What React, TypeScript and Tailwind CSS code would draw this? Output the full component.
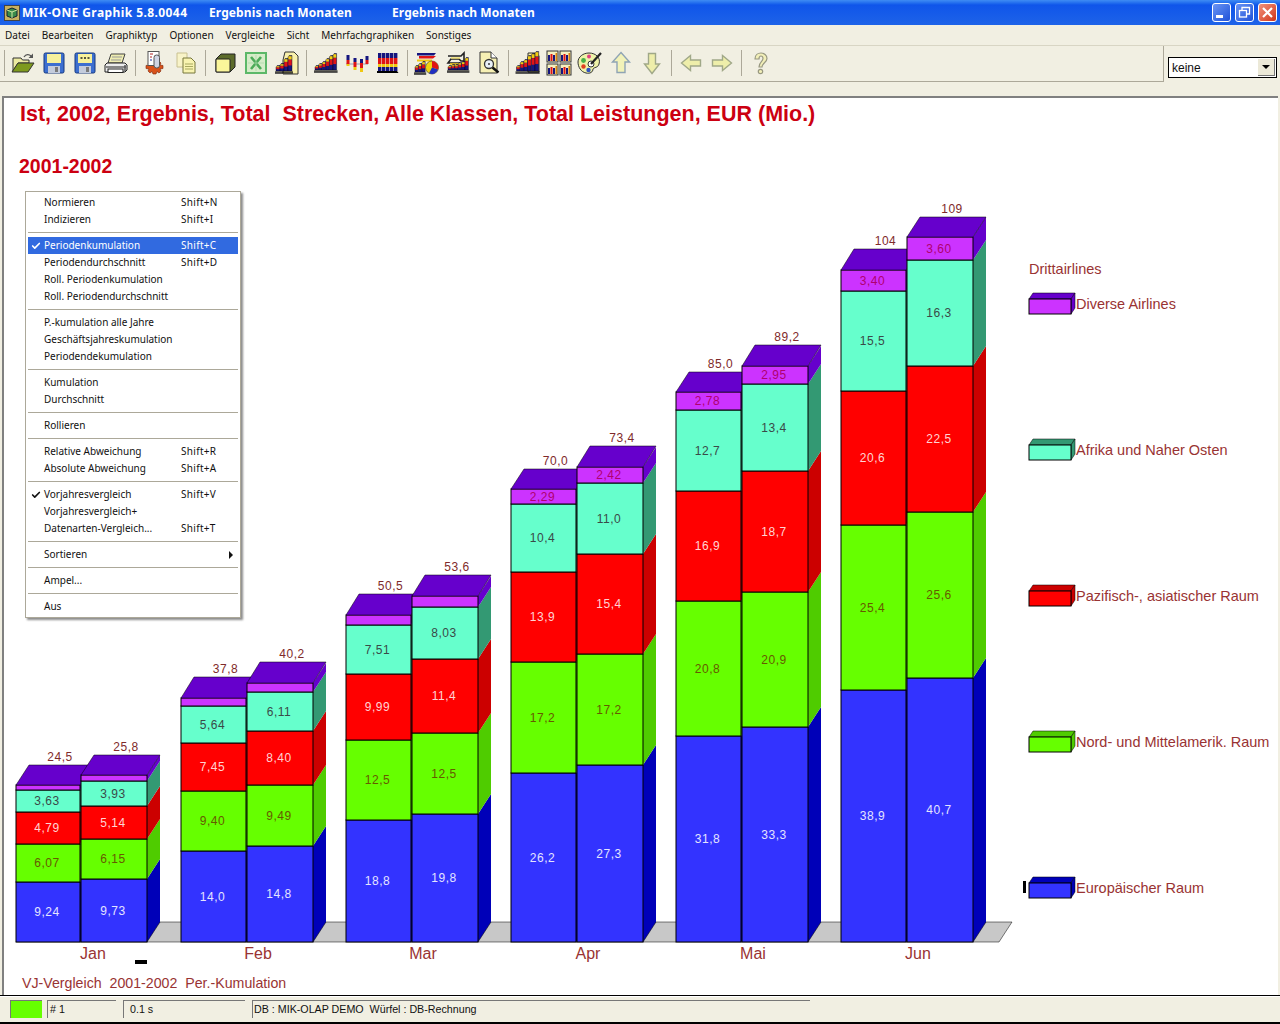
import type { ReactNode } from "react";
import { Check } from "lucide-react";

const colors = [
  { front: "#3333ff", side: "#0000b8", text: "#e4e4ff" },
  { front: "#66ff00", side: "#4fcc00", text: "#665a00" },
  { front: "#ff0000", side: "#cc0000", text: "#ffd4d4" },
  { front: "#66ffcc", side: "#339973", text: "#3a4a48" },
  { front: "#cc33ff", side: "#6600cc", text: "#b00070" },
];
const topColor = "#6600cc";

type Bar = { x: number; w: number; tops: number[]; back: number; total: string; labels: string[] };

const groups: { name: string; cx: number; bars: Bar[] }[] = [
  {
    name: "Jan",
    cx: 93,
    bars: [
      { x: 16, w: 64, tops: [882, 844, 812, 790, 785], back: 765, total: "24,5", labels: ["9,24", "6,07", "4,79", "3,63", ""] },
      { x: 81, w: 66, tops: [879, 839, 806, 781, 775], back: 755, total: "25,8", labels: ["9,73", "6,15", "5,14", "3,93", ""] },
    ],
  },
  {
    name: "Feb",
    cx: 258,
    bars: [
      { x: 181, w: 65, tops: [851, 791, 743, 706, 698], back: 677, total: "37,8", labels: ["14,0", "9,40", "7,45", "5,64", ""] },
      { x: 247, w: 66, tops: [846, 785, 731, 692, 683], back: 662, total: "40,2", labels: ["14,8", "9,49", "8,40", "6,11", ""] },
    ],
  },
  {
    name: "Mar",
    cx: 423,
    bars: [
      { x: 346, w: 65, tops: [820, 740, 674, 625, 615], back: 594, total: "50,5", labels: ["18,8", "12,5", "9,99", "7,51", ""] },
      { x: 412, w: 66, tops: [814, 733, 659, 607, 596], back: 575, total: "53,6", labels: ["19,8", "12,5", "11,4", "8,03", ""] },
    ],
  },
  {
    name: "Apr",
    cx: 588,
    bars: [
      { x: 511, w: 65, tops: [773, 662, 572, 504, 489], back: 469, total: "70,0", labels: ["26,2", "17,2", "13,9", "10,4", "2,29"] },
      { x: 577, w: 66, tops: [765, 654, 554, 483, 467], back: 446, total: "73,4", labels: ["27,3", "17,2", "15,4", "11,0", "2,42"] },
    ],
  },
  {
    name: "Mai",
    cx: 753,
    bars: [
      { x: 676, w: 65, tops: [736, 601, 491, 410, 392], back: 372, total: "85,0", labels: ["31,8", "20,8", "16,9", "12,7", "2,78"] },
      { x: 742, w: 66, tops: [727, 592, 471, 384, 366], back: 345, total: "89,2", labels: ["33,3", "20,9", "18,7", "13,4", "2,95"] },
    ],
  },
  {
    name: "Jun",
    cx: 918,
    bars: [
      { x: 841, w: 65, tops: [690, 525, 391, 291, 270], back: 249, total: "104", labels: ["38,9", "25,4", "20,6", "15,5", "3,40"] },
      { x: 907, w: 66, tops: [678, 512, 366, 260, 237], back: 217, total: "109", labels: ["40,7", "25,6", "22,5", "16,3", "3,60"] },
    ],
  },
];

const legend = [
  { y: 304, label: "Diverse Airlines", i: 4 },
  { y: 450, label: "Afrika und Naher Osten", i: 3 },
  { y: 596, label: "Pazifisch-, asiatischer Raum", i: 2 },
  { y: 742, label: "Nord- und Mittelamerik. Raum", i: 1 },
  { y: 888, label: "Europäischer Raum", i: 0 },
];

const BASE = 942;
const DX = 13;
const DY = 20;

function StackedBar({ bar }: { bar: Bar }) {
  const right = bar.x + bar.w;
  return (
    <g stroke="#000" strokeWidth="1">
      {bar.tops.map((top, i) => {
        const bottom = i === 0 ? BASE : bar.tops[i - 1];
        const c = colors[i];
        return (
          <g key={i}>
            <polygon
              points={`${right},${bottom} ${right + DX},${bottom - DY} ${right + DX},${top - DY} ${right},${top}`}
              fill={c.side}
              strokeWidth="0"
            />
            <rect x={bar.x} y={top} width={bar.w} height={bottom - top} fill={c.front} />
          </g>
        );
      })}
      <line x1={right} y1={BASE} x2={right + DX} y2={BASE - DY} strokeWidth="0.5" />
      <polygon
        points={`${bar.x},${bar.tops[4]} ${bar.x + DX},${bar.back} ${right + DX},${bar.back} ${right},${bar.tops[4]}`}
        fill={topColor}
        strokeWidth="0.5"
      />
    </g>
  );
}

function BarLabels({ bar }: { bar: Bar }) {
  const cx = bar.x + bar.w / 2 - 1;
  return (
    <g fontSize="12" textAnchor="middle" letterSpacing="0.5">
      {bar.labels.map((label, i) => {
        if (!label) return null;
        const bottom = i === 0 ? BASE : bar.tops[i - 1];
        return (
          <text key={i} x={cx} y={(bottom + bar.tops[i]) / 2 + 4} fill={colors[i].text}>
            {label}
          </text>
        );
      })}
      <text x={cx + 13} y={bar.back - 4} fill="#7f2a2a">
        {bar.total}
      </text>
    </g>
  );
}

function Chart() {
  return (
    <svg
      width="1275"
      height="780"
      viewBox="4 190 1275 780"
      className="block shrink-0"
      style={{ fontFamily: "'Liberation Sans', Arial, sans-serif" }}
    >
      <polygon points="16,942 29,922 1012,922 999,942" fill="#c8c8c8" stroke="#000" strokeWidth="0.5" />
      {groups.map((g) => (
        <g key={g.name}>
          <StackedBar bar={g.bars[0]} />
          <StackedBar bar={g.bars[1]} />
          <BarLabels bar={g.bars[0]} />
          <BarLabels bar={g.bars[1]} />
          <text x={g.cx} y={959} fontSize="16" textAnchor="middle" fill="#993333">
            {g.name}
          </text>
        </g>
      ))}
      <rect x="135" y="960" width="12" height="4" fill="#000" />
      <text x="1029" y="274" fontSize="14.5" fill="#993333">
        Drittairlines
      </text>
      {legend.map((l) => (
        <g key={l.label}>
          <polygon
            points={`1029,${l.y - 5} 1033,${l.y - 11} 1075,${l.y - 11} 1071,${l.y - 5}`}
            fill={colors[l.i].side}
            stroke="#000"
            strokeWidth="0.5"
          />
          <polygon
            points={`1071,${l.y - 5} 1075,${l.y - 11} 1075,${l.y + 4} 1071,${l.y + 10}`}
            fill={colors[l.i].side}
            stroke="#000"
            strokeWidth="0.5"
          />
          <rect x="1029" y={l.y - 5} width="42" height="15" fill={colors[l.i].front} stroke="#000" strokeWidth="1" />
          <text x="1076" y={l.y + 5} fontSize="14.5" fill="#993333">
            {l.label}
          </text>
        </g>
      ))}
      <rect x="1023" y="881" width="3" height="12" fill="#000" />
    </svg>
  );
}

/* ---- toolbar icons ---- */

function Ico({ children }: { children: ReactNode }) {
  return (
    <svg width="26" height="26" viewBox="0 0 26 26" className="block">
      {children}
    </svg>
  );
}

// stacked yellow/red/blue columns with a black foot, as on the old chart buttons
function MiniBars({ x, base, heights, w = 3.6 }: { x: number; base: number; heights: number[]; w?: number }) {
  return (
    <g>
      {heights.map((h, i) => {
        const bx = x + i * w;
        return (
          <g key={i}>
            <path d={`M${bx} ${base}V${base - h + 1}l1.200-1.500h${w - 1.2}V${base}z`} fill="#15157e" stroke="#000" strokeWidth="0.4" />
            <rect x={bx + 0.3} y={base - h * 0.75} width={w - 0.6} height={h * 0.38} fill="#e01414" />
            <rect x={bx + 0.3} y={base - h + 0.2} width={w - 0.6} height={h * 0.22} fill="#f4cf10" />
          </g>
        );
      })}
      <path d={`M${x - 1} ${base + 0.5}h${heights.length * w + 2}v1.200h-${heights.length * w + 2}z`} fill="#000" />
      <path d={`M${x - 1} ${base + 2.5}h${heights.length * w + 2}`} stroke="#333" strokeWidth="0.8" />
    </g>
  );
}

const folder = (
  <Ico>
    <path d="M3 8h8l1.500 2H19v3H8L3 21z" fill="#eceaa0" stroke="#333" />
    <path d="M8 13h16l-6 9H2z" fill="#7e9a1e" stroke="#333" />
    <path d="M14 7c2-3 5-3 7-1" fill="none" stroke="#555" strokeWidth="1.300" />
    <path d="M23 3.500v4.500h-4.500z" fill="#555" />
  </Ico>
);

function Floppy({ dots }: { dots?: boolean }) {
  return (
    <Ico>
      <rect x="3" y="3" width="20" height="20" rx="1.500" fill="#3d6fd0" stroke="#17397f" />
      <rect x="6" y="4" width="14" height="9" fill="#f7f19c" />
      {dots && <path d="M8.500 8h2M12 8h2M15.500 8h2" stroke="#222" strokeWidth="1.400" />}
      <rect x="7" y="16" width="12" height="7" fill="#c4ccdc" />
      <rect x="14" y="17" width="3" height="5" fill="#7a7a7a" />
    </Ico>
  );
}

const leftIcons: (ReactNode | "sep")[] = [
  folder,
  <Floppy />,
  <Floppy dots />,
  <Ico>
    <path d="M8 4h14l-3 9H5z" fill="#eeecb0" stroke="#444" />
    <path d="M9 7h10M8 10h10" stroke="#999" />
    <path d="M4 13h18l2 2v5l-2 2H2v-7z" fill="#ececec" stroke="#222" />
    <path d="M3 17h20" stroke="#222" />
    <rect x="5" y="19" width="15" height="3.500" fill="#fff" stroke="#222" />
    <path d="M22 15v6" stroke="#555" strokeWidth="1.500" />
  </Ico>,
  "sep",
  <Ico>
    <path
      d="M13 12l2 1 2-2 2 2-1 2 3 .5v3l-3 .500 1 2-2 2-2-1.500-1 2.500h-3l-1-2.500-2 1.500-2-2 1-2-3-.500v-3l3-.500-1-2 2-2 2 2z"
      fill="#d8521a"
      stroke="#7a2408"
      strokeWidth="0.600"
    />
    <rect x="6" y="1.500" width="11" height="14" fill="#fff" stroke="#555" />
    <path d="M8 4h3M8 7h2" stroke="#b02020" />
    <path d="M8 10h2" stroke="#2030a0" />
    <rect x="12" y="5" width="5.500" height="13" rx="2.500" fill="#cfd4e4" stroke="#555" />
  </Ico>,
  <Ico>
    <path d="M4 3h10v14H4z" fill="#f8f3c8" stroke="#c8c090" />
    <path d="M10 8h8l4 4v11H10z" fill="#f8f3b0" stroke="#77763c" />
    <path d="M12 14h8M12 16.500h8M12 19h8" stroke="#a8a860" />
  </Ico>,
  "sep",
  <Ico>
    <path d="M4 9l5-5h14v13l-5 5H4z" fill="#5c6b2a" stroke="#222" />
    <rect x="4" y="9" width="14" height="13" rx="1" fill="#fbf69a" stroke="#222" />
  </Ico>,
  <Ico>
    <rect x="3" y="3" width="20" height="20" fill="#d6ecc8" stroke="#5cb868" strokeWidth="2" />
    <path d="M8 7l10 12M18 7L8 19" stroke="#4cab58" strokeWidth="2.600" />
    <path d="M5 13h16M13 5v16" stroke="#a8d8a8" strokeWidth="0.700" />
  </Ico>,
  <Ico>
    <path d="M11 2h9l4 4v18H9V10z" fill="#f8f0ac" stroke="#333" />
    <MiniBars x={2} base={21} heights={[5, 7, 12, 15]} w={4} />
  </Ico>,
  "sep",
  <Ico>
    <MiniBars x={2} base={20} heights={[4, 6, 8, 11, 14, 16]} />
  </Ico>,
  <Ico>
    <path d="M2 14h22" stroke="#9a9ab0" strokeWidth="1" />
    <path d="M4 5v5M11 8v4M17.500 9v4M23 6v4" stroke="#15157e" strokeWidth="3" />
    <path d="M4 10v4M11 12v5M17.500 13v5M23 10v4" stroke="#e01414" strokeWidth="3" />
    <path d="M11 17v3M17.500 18v4M4 14v2" stroke="#f0c810" strokeWidth="3" />
  </Ico>,
  <Ico>
    {[3, 7, 11, 15, 19].map((x) => (
      <g key={x}>
        <rect x={x} y="3" width="3.400" height="5" fill="#15157e" />
        <rect x={x} y="8" width="3.400" height="6" fill="#e01414" />
        <rect x={x} y="14" width="3.400" height="3" fill="#f0c810" />
        <rect x={x} y="17" width="3.400" height="4" fill="#15157e" />
      </g>
    ))}
    <path d="M2 21h20l1.500 2H2z" fill="#000" />
  </Ico>,
  "sep",
  <Ico>
    <path d="M3 3h19l-2 2.500H3z" fill="#15157e" />
    <path d="M5 6h17l-3 2.500H5z" fill="#e01414" />
    <path d="M3 9.500h15v2H3z" fill="#f0c810" />
    <MiniBars x={1} base={22} heights={[6, 8, 10]} w={3.400} />
    <circle cx="18" cy="17.500" r="6.500" fill="#f0d410" stroke="#333" strokeWidth="0.600" />
    <path d="M18 17.500V11a6.500 6.500 0 0 1 6 8.500z" fill="#e01414" />
    <path d="M18 17.500l6 2a6.500 6.500 0 0 1-9 3.800z" fill="#2030c0" />
  </Ico>,
  <Ico>
    <path d="M3 6h13l3-3v8h-3l-2-2H6l-3 4h12" fill="none" stroke="#222" strokeWidth="1.600" />
    <path d="M6 8h9" stroke="#f0e070" strokeWidth="1.500" />
    <path d="M5 14h16" stroke="#f0c810" strokeWidth="1.500" />
    <MiniBars x={3} base={20} heights={[4, 5, 5, 7, 8, 12]} w={3.400} />
  </Ico>,
  <Ico>
    <path d="M4 2h11l6 6v15H4z" fill="#f6f0b4" stroke="#333" />
    <path d="M15 2v6h6" fill="#fff" stroke="#333" />
    <circle cx="13" cy="14" r="4.500" fill="#e8f0f8" stroke="#333" strokeWidth="1.300" />
    <path d="M12 13h2v2h-2z" fill="#666" />
    <path d="M16.500 17.500l6 5" stroke="#111" strokeWidth="2.400" />
  </Ico>,
  "sep",
  <Ico>
    <path d="M13 3h9l2 3v16H13z" fill="#f8f0a8" stroke="#333" />
    <MiniBars x={1.500} base={21} heights={[5, 9, 11, 15, 17, 19]} w={3.700} />
  </Ico>,
  <Ico>
    {[
      [1, 1],
      [14, 1],
      [1, 14],
      [14, 14],
    ].map(([x, y]) => (
      <g key={`${x}-${y}`}>
        <rect x={x} y={y} width="11" height="11" fill="#f4f0c0" stroke="#333" />
        <rect x={x + 1} y={y + 4} width="2" height="6" fill="#15157e" />
        <rect x={x + 3.500} y={y + 3} width="2" height="7" fill="#e01414" />
        <rect x={x + 6} y={y + 4} width="2" height="6" fill="#15157e" />
        <rect x={x + 8.500} y={y + 2} width="1.600" height="8" fill="#d88010" />
      </g>
    ))}
  </Ico>,
  <Ico>
    <path d="M12 3c7 0 12 5 10 11-1 4-5 3-6 5 0 3-3 5-7 4C4 22 1 17 1 12 1 7 6 3 12 3z" fill="#eef2a8" stroke="#333" />
    <circle cx="6.500" cy="10.500" r="2.400" fill="#48b048" />
    <circle cx="12" cy="6.500" r="2" fill="#e04080" />
    <circle cx="6.500" cy="16.500" r="2.200" fill="#e04020" />
    <circle cx="11.500" cy="20" r="2.200" fill="#3050c0" />
    <circle cx="14" cy="14" r="3" fill="#fff" stroke="#333" />
    <path d="M24 3L14 14" stroke="#222" strokeWidth="2.200" />
  </Ico>,
  <Ico>
    <path d="M13 2.500l8.500 9.500H17v10.500H9V12H4.500z" fill="#f2f2b8" stroke="#8fa4b4" strokeWidth="1.400" />
  </Ico>,
  <Ico>
    <path d="M13 23.500L5.500 14H9.500V3.500h7V14h4z" fill="#eeeeaa" stroke="#a0a888" strokeWidth="1.400" />
  </Ico>,
  "sep",
  <Ico>
    <path d="M3.500 13l9-7.500v4.500h10v6h-10v4.500z" fill="#eeeeaa" stroke="#a0a888" strokeWidth="1.400" />
  </Ico>,
  <Ico>
    <path d="M22.500 13l-9-7.500v4.500h-10v6h10v4.500z" fill="#eeeeaa" stroke="#a0a888" strokeWidth="1.400" />
  </Ico>,
  "sep",
  <Ico>
    <path
      d="M7 9c0-4 3-6 6-6s6 2 6 5.500c0 4-5 4.500-5 8.500h-3c0-5 4-5.500 4-8.500 0-1.500-1-2.500-2-2.500s-2 1-2 3z"
      fill="#f2efb8"
      stroke="#989880"
      strokeWidth="1.200"
    />
    <circle cx="12.500" cy="21.500" r="2.200" fill="#f2efb8" stroke="#989880" strokeWidth="1.200" />
  </Ico>,
];

/* ---- context menu ---- */

type MenuItem = { label: string; short?: string; checked?: boolean; active?: boolean; arrow?: boolean } | null;

const menu: MenuItem[] = [
  { label: "Normieren", short: "Shift+N" },
  { label: "Indizieren", short: "Shift+I" },
  null,
  { label: "Periodenkumulation", short: "Shift+C", checked: true, active: true },
  { label: "Periodendurchschnitt", short: "Shift+D" },
  { label: "Roll. Periodenkumulation" },
  { label: "Roll. Periodendurchschnitt" },
  null,
  { label: "P.-kumulation alle Jahre" },
  { label: "Geschäftsjahreskumulation" },
  { label: "Periodendekumulation" },
  null,
  { label: "Kumulation" },
  { label: "Durchschnitt" },
  null,
  { label: "Rollieren" },
  null,
  { label: "Relative Abweichung", short: "Shift+R" },
  { label: "Absolute Abweichung", short: "Shift+A" },
  null,
  { label: "Vorjahresvergleich", short: "Shift+V", checked: true },
  { label: "Vorjahresvergleich+" },
  { label: "Datenarten-Vergleich...", short: "Shift+T" },
  null,
  { label: "Sortieren", arrow: true },
  null,
  { label: "Ampel..." },
  null,
  { label: "Aus" },
];

function ContextMenu() {
  return (
    <div className="absolute left-[25px] top-[191px] w-[216px] h-[427px] bg-white border border-[#aca899] pt-[2px] px-[2px] shadow-[2px_2px_2px_rgba(0,0,0,0.45)] font-['Noto_Sans',sans-serif] text-[10px] text-[#111]">
      {menu.map((item, i) =>
        item === null ? (
          <div key={i} className="h-[9px] flex items-center">
            <div className="h-px w-full bg-[#aca899]" />
          </div>
        ) : (
          <div
            key={i}
            className={`relative h-[17px] flex items-center pl-[16px] ${item.active ? "bg-[#316ae0] text-white" : ""}`}
          >
            {item.checked && <Check className="absolute left-[3px] top-[4px] w-[10px] h-[10px]" strokeWidth={4} />}
            <span className="w-[137px] whitespace-nowrap">{item.label}</span>
            {item.short && <span className="tracking-[0.3px]">{item.short}</span>}
            {item.arrow && <div className="absolute right-[5px] top-[5px] border-y-[4px] border-y-transparent border-l-[4px] border-l-[#111]" />}
          </div>
        ),
      )}
    </div>
  );
}

const menuBar = ["Datei", "Bearbeiten", "Graphiktyp", "Optionen", "Vergleiche", "Sicht", "Mehrfachgraphiken", "Sonstiges"];

function WinButton({ children, close }: { children: ReactNode; close?: boolean }) {
  return (
    <div
      className={`w-[19px] h-[19px] rounded-[3px] border border-white flex items-center justify-center ${
        close ? "bg-gradient-to-br from-[#f0907a] to-[#d03010]" : "bg-gradient-to-br from-[#6a94f4] to-[#1f50d8]"
      }`}
    >
      {children}
    </div>
  );
}

export default function App() {
  return (
    <div className="relative w-[1280px] h-[1024px] overflow-hidden flex flex-col bg-[#f1efe2] font-['Noto_Sans',sans-serif]">
      {/* title bar */}
      <div className="h-[25px] shrink-0 flex items-center bg-gradient-to-b from-[#3f8cf3] via-[#0f55ea] via-[20%] to-[#1e63e8] text-white font-bold text-[12px] pl-[4px] pr-[3px]">
        <svg width="16" height="16" viewBox="0 0 16 16" className="mr-[2px]">
          <rect x="0.500" y="0.500" width="15" height="15" fill="#c8b060" stroke="#444" />
          <path d="M8 3l5 2v6l-5 2-5-2V5z" fill="#3a8a4a" stroke="#123" />
          <path d="M3 5l5 2 5-2M8 7v6" stroke="#cfe8a0" fill="none" />
        </svg>
        <span className="w-[187px] whitespace-nowrap tracking-[0.42px]">MIK-ONE Graphik 5.8.0044</span>
        <span className="w-[183px] whitespace-nowrap tracking-[0.1px]">Ergebnis nach Monaten</span>
        <span className="whitespace-nowrap tracking-[0.1px]">Ergebnis nach Monaten</span>
        <div className="ml-auto flex gap-[4px]">
          <WinButton>
            <div className="w-[7px] h-[3px] bg-white mt-[8px] mr-[5px]" />
          </WinButton>
          <WinButton>
            <svg width="13" height="13" viewBox="0 0 13 13" fill="none" stroke="#fff" strokeWidth="1.300">
              <path d="M4 4V1.500h7.500V8H9" />
              <rect x="1.500" y="4.500" width="7" height="6.500" />
            </svg>
          </WinButton>
          <WinButton close>
            <svg width="13" height="13" viewBox="0 0 13 13" stroke="#fff" strokeWidth="2.200">
              <path d="M2 2l9 9M11 2l-9 9" />
            </svg>
          </WinButton>
        </div>
      </div>

      {/* menu bar */}
      <div className="h-[21px] shrink-0 flex items-center gap-[12px] pl-[5px] text-[10px] text-[#111] border-b border-[#d8d5c4]">
        {menuBar.map((m) => (
          <span key={m}>{m}</span>
        ))}
      </div>

      {/* toolbar */}
      <div className="h-[36px] shrink-0 flex">
        <div className="w-[1164px] border-b border-r border-[#aca899] flex items-center pl-[2px] pb-[2px]">
          <div className="w-[5px] flex justify-center">
            <div className="w-px h-[26px] bg-[#aca899]" />
          </div>
          {leftIcons.map((item, i) =>
            item === "sep" ? (
              <div key={i} className="w-[8px] flex justify-center">
                <div className="w-px h-[26px] bg-[#aca899]" />
              </div>
            ) : (
              <div key={i} className="w-[31px] flex justify-center">
                {item}
              </div>
            ),
          )}
        </div>
        <div className="pl-[4px] pt-[11px]">
          <div className="w-[109px] h-[21px] bg-white border border-black flex items-center justify-between pl-[3px] pr-px text-[12px] text-[#111] font-['Liberation_Sans',sans-serif]">
            keine
            <div className="w-[17px] h-[17px] bg-[#ece9d8] border-r border-b border-[#777] flex items-center justify-center">
              <div className="border-x-[4px] border-x-transparent border-t-[4px] border-t-black" />
            </div>
          </div>
        </div>
      </div>

      {/* spacer strip */}
      <div className="h-[14px] shrink-0" />

      {/* chart panel */}
      <div className="relative h-[899px] shrink-0 mx-[2px] border-l-2 border-t-2 border-[#808080] bg-white flex flex-col font-['Liberation_Sans',sans-serif]">
        <div className="pl-[16px] pt-[3px] h-[56px] text-[21.500px] leading-[26px] font-bold text-[#cc0011] whitespace-pre shrink-0">
          {"Ist, 2002, Ergebnis, Total  Strecken, Alle Klassen, Total Leistungen, EUR (Mio.)"}
        </div>
        <div className="pl-[15px] h-[36px] text-[19.500px] leading-[24px] font-bold text-[#cc0011] shrink-0">2001-2002</div>
        <Chart />
        <div className="pl-[18px] mt-[5px] text-[14.200px] leading-[17px] text-[#993333] whitespace-pre">
          {"VJ-Vergleich  2001-2002  Per.-Kumulation"}
        </div>
      </div>

      {/* status bar */}
      <div className="h-[29px] shrink-0 border-t border-t-black border-b-2 border-b-black shadow-[inset_0_1px_0_#fff] bg-[#f1efe2] flex items-center pl-[10px] gap-[5px] text-[10.700px] text-[#111] font-['Liberation_Sans',sans-serif]">
        <div className="w-[32px] h-[18px] bg-[#66ff00] border-l border-t border-[#777]" />
        <div className="w-[69px] h-[18px] border-l border-t border-[#777] pl-[2px] flex items-center">{"# 1"}</div>
        <div className="w-[122px] h-[18px] border-l border-t border-[#777] ml-[2px] pl-[6px] flex items-center">0.1 s</div>
        <div className="w-[558px] h-[18px] border-l border-t border-[#777] ml-[2px] pl-[1px] flex items-center whitespace-pre">
          {"DB : MIK-OLAP DEMO  Würfel : DB-Rechnung"}
        </div>
      </div>

      <ContextMenu />
    </div>
  );
}
